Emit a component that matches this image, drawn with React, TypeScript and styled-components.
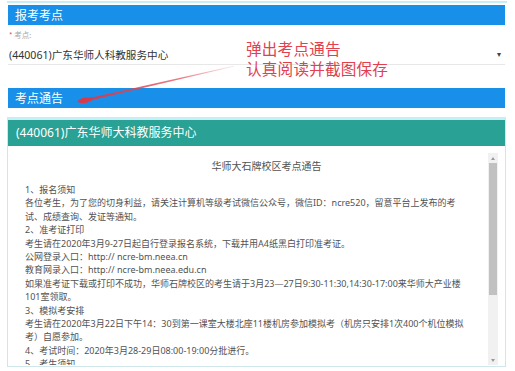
import React from 'react'
import styled, { createGlobalStyle } from 'styled-components'

const GlobalStyle = createGlobalStyle`
  html, body {
    margin: 0;
    padding: 0;
    background: #fff;
  }
  body {
    font-family: "Noto Sans", "Noto Sans CJK SC", sans-serif;
    color: #444;
  }
`

const noticeLines = [
  '1、报名须知',
  '各位考生，为了您的切身利益，请关注计算机等级考试微信公众号，微信ID：ncre520，留意平台上发布的考',
  '试、成绩查询、发证等通知。',
  '2、准考证打印',
  '考生请在2020年3月9-27日起自行登录报名系统，下载并用A4纸黑白打印准考证。',
  '公网登录入口：http:// ncre-bm.neea.cn',
  '教育网录入口：http:// ncre-bm.neea.edu.cn',
  '如果准考证下载或打印不成功，华师石牌校区的考生请于3月23—27日9:30-11:30,14:30-17:00来华师大产业楼',
  '101室领取。',
  '3、模拟考安排',
  '考生请在2020年3月22日下午14：30到第一课室大楼北座11楼机房参加模拟考（机房只安排1次400个机位模拟',
  '考）自愿参加。',
  '4、考试时间：2020年3月28-29日08:00-19:00分批进行。',
  '5、考生须知',
]

const App = () => (
  <>
    <GlobalStyle />
    <Page>
      <Overlay>
        <Callout>
          <span>弹出考点通告</span>
          <span>认真阅读并截图保存</span>
        </Callout>
        <Arrow width="515" height="120" viewBox="0 0 515 120">
          <defs>
            <linearGradient id="fade" x1="234" y1="66" x2="80" y2="101" gradientUnits="userSpaceOnUse">
              <stop offset="0" stopColor="#e8606b" stopOpacity="0.15" />
              <stop offset="0.35" stopColor="#e0505d" stopOpacity="0.75" />
              <stop offset="1" stopColor="#d83848" stopOpacity="1" />
            </linearGradient>
          </defs>
          <path
            d="M234 65.7 L93 97.2 Q88 97.2 84.5 97.4 Q79 99 77 101.6 Q80 103.6 86 103 Q90 101.5 94 99.6 L234.1 66.4 Z"
            fill="url(#fade)"
          />
        </Arrow>
      </Overlay>

      <Section>
        <BlueBar>报考考点</BlueBar>
        <FieldLabel>
          <Required>*</Required> 考点:
        </FieldLabel>
        <SelectRow>
          <span>(440061)广东华师人科教服务中心</span>
          <Caret>▾</Caret>
        </SelectRow>
      </Section>

      <BlueBar $top={23}>考点通告</BlueBar>

      <Panel>
        <PanelHeader>(440061)广东华师大科教服务中心</PanelHeader>
        <PanelBody>
          <ScrollArea>
            <ScrollContent>
              <NoticeTitle>华师大石牌校区考点通告</NoticeTitle>
              {noticeLines.map((line, i) => (
                <Line key={i}>{line}</Line>
              ))}
            </ScrollContent>
            <ScrollBar>
              <ScrollButton>
                <Triangle $dir="up" />
              </ScrollButton>
              <Track>
                <Thumb />
              </Track>
              <ScrollButton>
                <Triangle $dir="down" />
              </ScrollButton>
            </ScrollBar>
          </ScrollArea>
        </PanelBody>
      </Panel>
    </Page>
  </>
)

export default App

const Page = styled.div`
  position: relative;
  width: 515px;
  height: 371px;
  box-sizing: border-box;
  padding: 0 10px 0 8px;
  overflow: hidden;
`

const Overlay = styled.div`
  position: absolute;
  left: 0;
  top: 0;
  width: 515px;
  height: 120px;
  pointer-events: none;
  z-index: 2;
`

const Callout = styled.div`
  position: absolute;
  left: 246px;
  top: 38px;
  display: flex;
  flex-direction: column;
  font-family: "Noto Sans CJK SC", sans-serif;
  font-size: 15.6px;
  line-height: 20px;
  color: #e2404d;
  letter-spacing: 0.2px;
`

const Arrow = styled.svg`
  position: absolute;
  left: 0;
  top: 0;
`

const Section = styled.div`
  margin: 1px -2px 0 -1px;
  padding: 2px 2px 0 1px;
  border-top: 2px solid #c6eef7;
`

const BlueBar = styled.div<{ $top?: number }>`
  height: 20px;
  margin-top: ${(p) => p.$top ?? 0}px;
  padding-left: 7px;
  background: #1890e9;
  color: #fff;
  font-family: "Noto Sans CJK SC", sans-serif;
  font-size: 12px;
  line-height: 20px;
`

const FieldLabel = styled.div`
  margin-top: 5px;
  padding-left: 1px;
  font-family: "Noto Sans CJK SC", sans-serif;
  font-size: 7.5px;
  line-height: 10px;
  color: #a8a8a8;
`

const Required = styled.span`
  color: #e04b4b;
`

const SelectRow = styled.div`
  display: flex;
  align-items: center;
  justify-content: space-between;
  height: 19px;
  margin-top: 5px;
  padding: 0 4px 0 1px;
  border-bottom: 1px solid #e8e8e8;
  font-size: 10.6px;
  color: #333;
`

const Caret = styled.span`
  font-size: 8px;
  color: #444;
  margin-top: -3px;
`

const Panel = styled.div`
  margin: 9px -1px 0 -1px;
  border: 1px solid #cfe6ea;
  border-top: 3px solid #c6eef7;
`

const PanelHeader = styled.div`
  height: 26px;
  padding-left: 8px;
  background: #29a195;
  color: #fff;
  font-size: 12px;
  line-height: 26px;
`

const PanelBody = styled.div`
  padding: 7px 7px 1px 7px;
  background: #fff;
`

const ScrollArea = styled.div`
  display: flex;
  height: 212px;
`

const ScrollContent = styled.div`
  flex: 1;
  min-width: 0;
  overflow: hidden;
  padding: 6px 12px 0 10px;
  font-size: 9px;
  color: #525252;
`

const ScrollBar = styled.div`
  width: 10px;
  display: flex;
  flex-direction: column;
  background: #f1f1f1;
`

const ScrollButton = styled.div`
  height: 10px;
  display: flex;
  align-items: center;
  justify-content: center;
`

const Triangle = styled.span<{ $dir: 'up' | 'down' }>`
  width: 0;
  height: 0;
  border-left: 2.5px solid transparent;
  border-right: 2.5px solid transparent;
  ${(p) =>
    p.$dir === 'up'
      ? 'border-bottom: 3px solid #999;'
      : 'border-top: 3px solid #999;'}
`

const Track = styled.div`
  flex: 1;
  padding: 0 1px;
`

const Thumb = styled.div`
  height: 132px;
  background: #c1c1c1;
`

const NoticeTitle = styled.div`
  padding-left: 32px;
  margin-bottom: 10px;
  text-align: center;
  font-size: 10px;
  line-height: 14px;
`

const Line = styled.div`
  white-space: nowrap;
  line-height: 13.4px;
`
